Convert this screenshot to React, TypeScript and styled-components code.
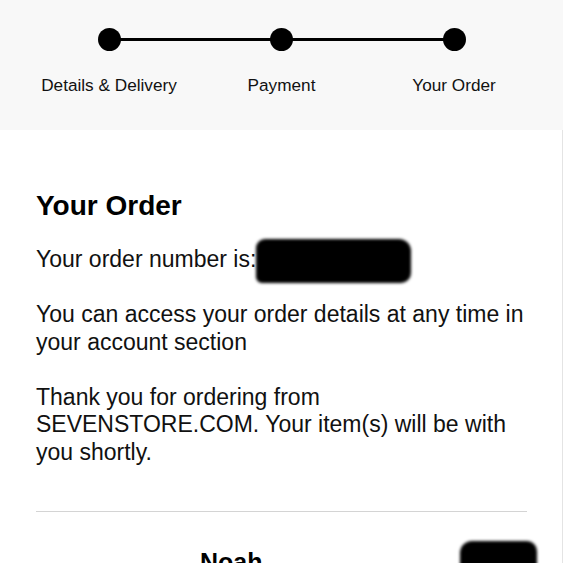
import React from "react";
import styled, { createGlobalStyle } from "styled-components";

const GlobalStyle = createGlobalStyle`
  html, body {
    margin: 0;
    padding: 0;
    background: #ffffff;
  }
  body {
    font-family: "Liberation Sans", Arial, Helvetica, sans-serif;
    color: #111111;
  }
`;

const Page = styled.div`
  width: 563px;
  min-height: 563px;
  overflow: hidden;
`;

const StepperBar = styled.header`
  height: 130px;
  box-sizing: border-box;
  padding-top: 28px;
  background-color: #f8f8f8;
  display: flex;
  justify-content: center;
`;

const Steps = styled.ol`
  list-style: none;
  margin: 0;
  padding: 0;
  display: grid;
  grid-template-columns: repeat(3, 172.5px);
`;

const Step = styled.li<{ $first?: boolean }>`
  position: relative;
  display: flex;
  flex-direction: column;
  align-items: center;

  /* connector from the previous dot */
  &::before {
    content: "";
    display: ${(p) => (p.$first ? "none" : "block")};
    position: absolute;
    top: 10px;
    right: 50%;
    width: 100%;
    height: 3px;
    background: #000;
  }
`;

const Dot = styled.span`
  position: relative;
  z-index: 1;
  width: 23px;
  height: 23px;
  border-radius: 50%;
  background: #000;
`;

const StepLabel = styled.span`
  margin-top: 24px;
  font-size: 17.2px;
  line-height: 20px;
  color: #111;
  white-space: nowrap;
`;

const Content = styled.main`
  padding: 58px 36px 0 36px;
  box-shadow: inset -1px 0 0 #e4e4e4;
`;

const Heading = styled.h1`
  margin: 0;
  font-size: 28px;
  line-height: 35px;
  font-weight: 700;
  color: #000;
`;

const Text = styled.p<{ $first?: boolean }>`
  margin: ${(p) => (p.$first ? "23px" : "27.5px")} 0 0 0;
  font-size: 23px;
  line-height: 27.5px;
  color: #111;
`;

const Redacted = styled.span<{ $w: number; $h: number }>`
  display: inline-block;
  width: ${(p) => p.$w}px;
  height: ${(p) => p.$h}px;
  margin: -9px 0 -9px 0;
  vertical-align: middle;
  background: #000;
  border-radius: 9px 12px 10px 6px;
  filter: blur(1.6px);
`;

const Divider = styled.hr`
  margin: 45px 0 0 0;
  border: 0;
  height: 1px;
  background: #d4d4d4;
`;

const ItemRow = styled.section`
  margin-top: 29px;
  display: grid;
  grid-template-columns: 164px 1fr auto;
  align-items: start;
`;

const ItemThumb = styled.div`
  height: 150px;
`;

const ItemName = styled.h2`
  margin: 6px 0 0 0;
  font-size: 25px;
  line-height: 30px;
  font-weight: 700;
  color: #000;
`;

const PriceBlot = styled.div`
  width: 77px;
  height: 36px;
  margin-right: -10px;
  background: #000;
  border-radius: 12px 10px 8px 8px;
  filter: blur(1.6px);
`;

const steps = ["Details & Delivery", "Payment", "Your Order"];

export default function App() {
  return (
    <Page>
      <GlobalStyle />
      <StepperBar>
        <Steps>
          {steps.map((s, i) => (
            <Step key={s} $first={i === 0}>
              <Dot />
              <StepLabel>{s}</StepLabel>
            </Step>
          ))}
        </Steps>
      </StepperBar>
      <Content>
        <Heading>Your Order</Heading>
        <Text $first>
          Your order number is:<Redacted $w={155} $h={44} />
        </Text>
        <Text>
          You can access your order details at any time in your account
          section
        </Text>
        <Text>
          Thank you for ordering from SEVENSTORE.COM. Your item(s) will be
          with you shortly.
        </Text>
        <Divider />
        <ItemRow>
          <ItemThumb />
          <ItemName>Noah</ItemName>
          <PriceBlot />
        </ItemRow>
      </Content>
    </Page>
  );
}
